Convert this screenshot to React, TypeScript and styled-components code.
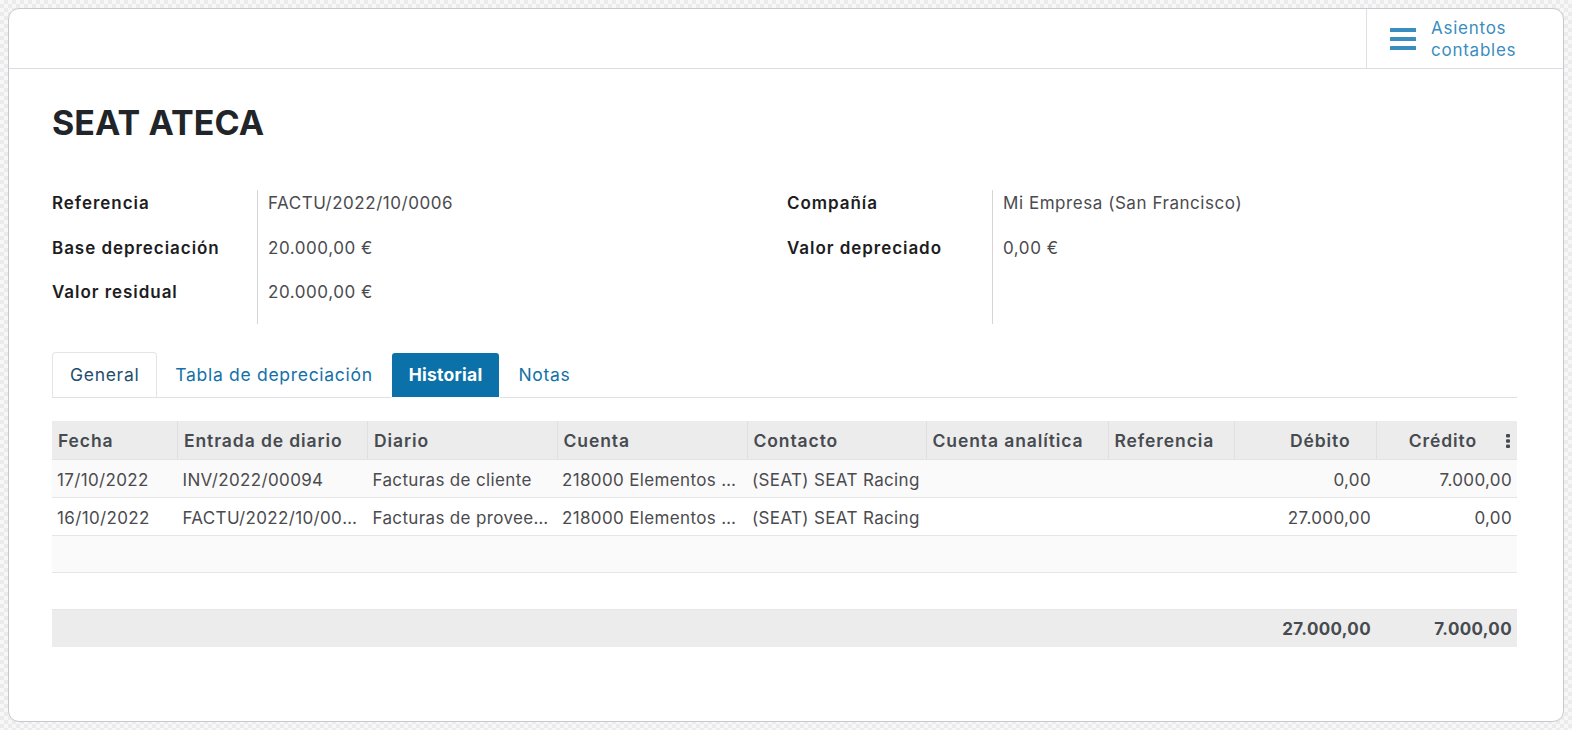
import React from "react";
import styled, { createGlobalStyle } from "styled-components";

const Global = createGlobalStyle`
  html, body { margin: 0; padding: 0; }
  body {
    padding: 8px;
    box-sizing: border-box;
    height: 100vh;
    font-family: Inter, "Noto Sans", sans-serif;
    letter-spacing: 0.45px;
    background: repeating-conic-gradient(#ebebeb 0 25%, #f7f7f7 0 50%) 0 0 / 8px 8px;
  }
  #root { height: 100%; }
  * { box-sizing: border-box; }
`;

const Card = styled.div`
  height: 100%;
  background: #fff;
  border: 1px solid #c8c8d0;
  border-radius: 11px;
  overflow: hidden;
  display: flex;
  flex-direction: column;
`;

const TopBar = styled.div`
  height: 60px;
  border-bottom: 1px solid #dcdde2;
  display: flex;
  justify-content: flex-end;
  flex-shrink: 0;
`;

const SmartButton = styled.button`
  width: 197px;
  border: none;
  border-left: 1px solid #dfe0e4;
  background: transparent;
  display: flex;
  align-items: center;
  gap: 15px;
  padding: 0 0 0 23px;
  font-family: inherit;
  cursor: pointer;
`;

const SmartLabel = styled.span`
  color: #3a8dbf;
  font-size: 17px;
  letter-spacing: 0.75px;
  line-height: 22px;
  text-align: left;
`;

const Sheet = styled.div`
  padding: 32px 46px 0 43px;
`;

const Title = styled.h1`
  margin: 0;
  font-size: 34px;
  line-height: 44px;
  font-weight: 700;
  color: #212529;
  letter-spacing: 0.1px;
`;

const FieldGrid = styled.div`
  margin-top: 45px;
  display: grid;
  grid-template-columns: 1fr 1fr;
  column-gap: 5px;
`;

const Group = styled.div`
  display: flex;
`;

const LabelCol = styled.div`
  width: 205px;
  flex-shrink: 0;
`;

const ValueCol = styled.div`
  flex: 1;
  border-left: 1px solid #d6d6d6;
  padding-left: 10px;
  min-height: 133.5px;
`;

const FieldRow = styled.div`
  height: 44.5px;
  line-height: 26px;
  font-size: 17px;
`;

const Label = styled(FieldRow)`
  font-weight: 600;
  color: #1d1d1f;
  letter-spacing: 0.95px;
`;

const Value = styled(FieldRow)`
  color: #4b4b4f;
  letter-spacing: 0.55px;
`;

const Tabs = styled.div`
  margin-top: 28px;
  display: flex;
  border-bottom: 1px solid #dee2e6;
  height: 46px;
`;

const Tab = styled.div<{ $variant?: "outlined" | "active" | "plain" }>`
  height: 46px;
  margin-bottom: -1px;
  display: flex;
  align-items: center;
  padding: 0 17px;
  font-size: 17.5px;
  letter-spacing: ${(p) => (p.$variant === "active" ? "0.25px" : "0.7px")};
  border-radius: 4px 4px 0 0;
  border: 1px solid
    ${(p) => (p.$variant === "outlined" ? "#e2e4e8" : "transparent")};
  border-bottom-color: ${(p) => (p.$variant === "active" ? "#fff" : "#dee2e6")};
  background: ${(p) =>
    p.$variant === "active"
      ? "#0b71a8"
      : p.$variant === "outlined"
      ? "#fff"
      : "transparent"};
  background-clip: padding-box;
  color: ${(p) =>
    p.$variant === "active"
      ? "#fff"
      : p.$variant === "outlined"
      ? "#1f4d70"
      : "#1271a8"};
  font-weight: ${(p) => (p.$variant === "active" ? 700 : 400)};
`;

const Table = styled.table`
  margin-top: 23px;
  width: 100%;
  border-collapse: collapse;
  table-layout: fixed;
  font-size: 17px;
  letter-spacing: 0.35px;
  color: #4b4b4f;
`;

const Th = styled.th<{ $num?: boolean; $pr?: number }>`
  height: 39px;
  background: #ececec;
  font-size: 17.5px;
  letter-spacing: 0.9px;
  font-weight: 600;
  color: #474b50;
  text-align: ${(p) => (p.$num ? "right" : "left")};
  padding: 1px ${(p) => (p.$pr != null ? p.$pr : 6)}px 0 6px;
  border-left: 1px solid #e0e0e0;
  border-bottom: 1px solid #e3e3e3;
  white-space: nowrap;
  overflow: hidden;
  position: relative;
  &:first-child { border-left: none; }
`;

const Tr = styled.tr<{ $odd?: boolean; $h: number }>`
  height: ${(p) => p.$h}px;
  background: ${(p) => (p.$odd ? "#fafafa" : "#fff")};
  border-bottom: 1px solid #e6e6e6;
`;

const Td = styled.td<{ $num?: boolean }>`
  padding: 2px ${(p) => (p.$num ? "5px" : "4px")} 0 5px;
  text-align: ${(p) => (p.$num ? "right" : "left")};
  white-space: nowrap;
  overflow: hidden;
  text-overflow: ellipsis;
`;

const FootRow = styled.tr`
  height: 37px;
  background: #ececec;
`;

const FootTd = styled.td`
  padding: 1px 5px 0;
  text-align: right;
  font-weight: 700;
  color: #474b50;
`;

const Kebab = styled.svg`
  position: absolute;
  right: 7px;
  top: 13px;
`;

const cols = [125.5, 190, 189.5, 190, 179, 182, 126, 142, 141];

const rows = [
  ["17/10/2022", "INV/2022/00094", "Facturas de cliente", "218000 Elementos de transporte", "(SEAT) SEAT Racing", "", "", "0,00", "7.000,00"],
  ["16/10/2022", "FACTU/2022/10/0006", "Facturas de proveedores", "218000 Elementos de transporte", "(SEAT) SEAT Racing", "", "", "27.000,00", "0,00"],
];

export default function App() {
  return (
    <>
      <Global />
      <Card>
        <TopBar>
          <SmartButton>
            <svg width="26" height="22" viewBox="0 0 26 22">
              <rect x="0" y="0" width="26" height="4" rx="0.5" fill="#3a8dbf" />
              <rect x="0" y="9" width="26" height="4" rx="0.5" fill="#3a8dbf" />
              <rect x="0" y="18" width="26" height="4" rx="0.5" fill="#3a8dbf" />
            </svg>
            <SmartLabel>
              Asientos
              <br />
              contables
            </SmartLabel>
          </SmartButton>
        </TopBar>
        <Sheet>
          <Title>SEAT ATECA</Title>
          <FieldGrid>
            <Group>
              <LabelCol>
                <Label>Referencia</Label>
                <Label>Base depreciación</Label>
                <Label>Valor residual</Label>
              </LabelCol>
              <ValueCol>
                <Value>FACTU/2022/10/0006</Value>
                <Value>20.000,00 €</Value>
                <Value>20.000,00 €</Value>
              </ValueCol>
            </Group>
            <Group>
              <LabelCol>
                <Label>Compañía</Label>
                <Label>Valor depreciado</Label>
              </LabelCol>
              <ValueCol>
                <Value>Mi Empresa (San Francisco)</Value>
                <Value>0,00 €</Value>
              </ValueCol>
            </Group>
          </FieldGrid>
          <Tabs>
            <Tab $variant="outlined">General</Tab>
            <Tab $variant="plain">Tabla de depreciación</Tab>
            <Tab $variant="active">Historial</Tab>
            <Tab $variant="plain">Notas</Tab>
          </Tabs>
          <Table>
            <colgroup>
              {cols.map((w, i) => (
                <col key={i} style={{ width: w }} />
              ))}
            </colgroup>
            <thead>
              <tr>
                <Th>Fecha</Th>
                <Th>Entrada de diario</Th>
                <Th>Diario</Th>
                <Th>Cuenta</Th>
                <Th>Contacto</Th>
                <Th>Cuenta analítica</Th>
                <Th>Referencia</Th>
                <Th $num $pr={25}>Débito</Th>
                <Th $num $pr={40}>
                  Crédito
                  <Kebab width="4" height="14" viewBox="0 0 4 14">
                    <rect x="0" y="0" width="4" height="3.5" rx="1" fill="#474b50" />
                    <rect x="0" y="5.25" width="4" height="3.5" rx="1" fill="#474b50" />
                    <rect x="0" y="10.5" width="4" height="3.5" rx="1" fill="#474b50" />
                  </Kebab>
                </Th>
              </tr>
            </thead>
            <tbody>
              {rows.map((r, i) => (
                <Tr key={i} $odd={i % 2 === 0} $h={38}>
                  {r.map((c, j) => (
                    <Td key={j} $num={j >= 7}>
                      {c}
                    </Td>
                  ))}
                </Tr>
              ))}
              <Tr $odd $h={37}>
                <Td colSpan={9} />
              </Tr>
              <Tr $h={37}>
                <Td colSpan={9} />
              </Tr>
            </tbody>
            <tfoot>
              <FootRow>
                <FootTd colSpan={7} />
                <FootTd>27.000,00</FootTd>
                <FootTd>7.000,00</FootTd>
              </FootRow>
            </tfoot>
          </Table>
        </Sheet>
      </Card>
    </>
  );
}
